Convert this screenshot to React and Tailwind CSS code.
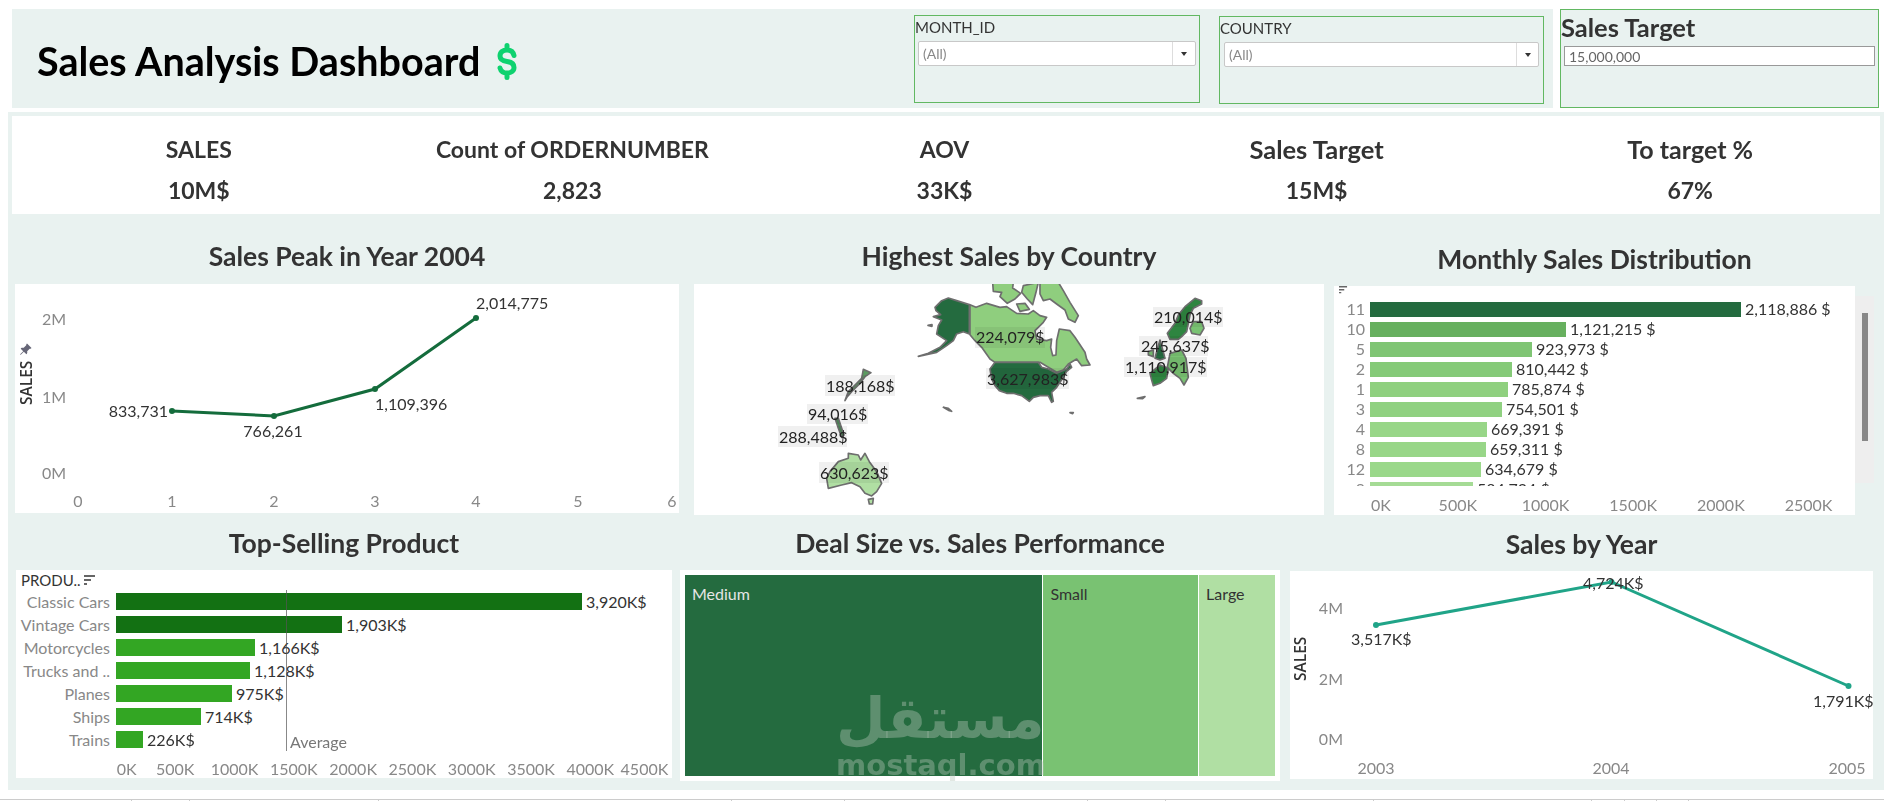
import { BsPinAngleFill } from "react-icons/bs";

const months = [
  { m: "11", v: "2,118,886 $", w: 371, c: "#246b3f" },
  { m: "10", v: "1,121,215 $", w: 196, c: "#67b05f" },
  { m: "5", v: "923,973 $", w: 162, c: "#7fc574" },
  { m: "2", v: "810,442 $", w: 142, c: "#85ca78" },
  { m: "1", v: "785,874 $", w: 138, c: "#8fd07f" },
  { m: "3", v: "754,501 $", w: 132, c: "#90d181" },
  { m: "4", v: "669,391 $", w: 117, c: "#98d688" },
  { m: "8", v: "659,311 $", w: 116, c: "#98d688" },
  { m: "12", v: "634,679 $", w: 111, c: "#9ad88a" },
  { m: "9", v: "584,724 $", w: 103, c: "#a5db95" },
];

const products = [
  { n: "Classic Cars", v: "3,920K$", w: 466, c: "#137113" },
  { n: "Vintage Cars", v: "1,903K$", w: 226, c: "#137113" },
  { n: "Motorcycles", v: "1,166K$", w: 139, c: "#33a623" },
  { n: "Trucks and ..", v: "1,128K$", w: 134, c: "#33a623" },
  { n: "Planes", v: "975K$", w: 116, c: "#33a623" },
  { n: "Ships", v: "714K$", w: 85, c: "#33a623" },
  { n: "Trains", v: "226K$", w: 27, c: "#33a623" },
];

const kpis = [
  { k: "SALES", v: "10M$", c: "text-[23px]", p: "" },
  { k: "Count of ORDERNUMBER", v: "2,823", c: "text-[23px]", p: "" },
  { k: "AOV", v: "33K$", c: "text-[23px]", p: "pr-[3px]" },
  { k: "Sales Target", v: "15M$", c: "text-[25.5px]", p: "pr-[6px]" },
  { k: "To target %", v: "67%", c: "text-[25px]", p: "pr-[6px]" },
];

const mapLabels = [
  { t: "224,079$", x: 976, y: 337, bx: 975, bw: 70, by: 327, bh: 21 },
  { t: "3,627,983$", x: 987, y: 379, bx: 986, bw: 83, by: 368, bh: 21 },
  { t: "210,014$", x: 1154, y: 317, bx: 1153, bw: 70, by: 307, bh: 20 },
  { t: "245,637$", x: 1141, y: 346, bx: 1139, bw: 69, by: 336, bh: 20 },
  { t: "1,110,917$", x: 1125, y: 367, bx: 1124, bw: 83, by: 357, bh: 20 },
  { t: "188,168$", x: 826, y: 386, bx: 825, bw: 70, by: 375, bh: 21 },
  { t: "94,016$", x: 808, y: 414, bx: 807, bw: 61, by: 404, bh: 20 },
  { t: "288,488$", x: 779, y: 437, bx: 778, bw: 69, by: 426, bh: 21 },
  { t: "630,623$", x: 820, y: 473, bx: 819, bw: 70, by: 462, bh: 21 },
];

const ticks = [132, 58, 189, 353, 113, 243, 78, 208, 218, 33, 32, 32];

function Title({ children, className }) {
  return (
    <div className={"flex items-center justify-center text-[26.5px] font-bold text-[#333] " + className}>
      {children}
    </div>
  );
}

function Filter({ label, className, selectClass, dividerClass }) {
  return (
    <div className={"border border-[#62b862] " + className}>
      <div className="h-[25px] text-[15px] leading-[23px] text-[#333]">{label}</div>
      <div className={"flex h-[25px] items-center justify-between rounded-[2px] border border-[#c8c8c8] bg-white text-[14px] text-[#888] " + selectClass}>
        <span className="pl-1">(All)</span>
        <span className={"flex h-full items-center justify-center border-l border-[#ddd] " + dividerClass}>
          <span className="h-0 w-0 border-x-[3px] border-t-[4px] border-x-transparent border-t-[#333]" />
        </span>
      </div>
    </div>
  );
}

function SortIcon({ className }) {
  return (
    <svg width="11" height="10" viewBox="0 0 11 10" className={className}>
      <rect x="0" y="0" width="11" height="2" fill="#666" />
      <rect x="0" y="4" width="7" height="2" fill="#666" />
      <rect x="0" y="8" width="3" height="2" fill="#666" />
    </svg>
  );
}

function PeakChart() {
  const ax = "fill-[#888] text-[16px]";
  const lb = "fill-[#333] text-[16px]";
  return (
    <svg width="664" height="229" className="block">
      <polyline points="157,127 259,132 360,105 461,34" fill="none" stroke="#146c3c" strokeWidth="3" />
      {[[157, 127], [259, 132], [360, 105], [461, 34]].map(([x, y]) => (
        <circle key={x} cx={x} cy={y} r="3" fill="#146c3c" />
      ))}
      <text x="461" y="25" className={lb}>2,014,775</text>
      <text x="153" y="133" textAnchor="end" className={lb}>833,731</text>
      <text x="258" y="153" textAnchor="middle" className={lb}>766,261</text>
      <text x="360" y="126" className={lb}>1,109,396</text>
      <text x="27" y="41" className={ax}>2M</text>
      <text x="27" y="119" className={ax}>1M</text>
      <text x="27" y="195" className={ax}>0M</text>
      {["0", "1", "2", "3", "4", "5", "6"].map((t, i) => (
        <text key={t} x={[63, 157, 259, 360, 461, 563, 657][i]} y="223" textAnchor="middle" className={ax}>{t}</text>
      ))}
      <text transform="translate(17 121) rotate(-90)" className="fill-[#333] text-[15.5px] font-semibold font-['Open_Sans',sans-serif]">SALES</text>
    </svg>
  );
}

function YearChart() {
  const ax = "fill-[#888] text-[16px]";
  const lb = "fill-[#333] text-[16px]";
  return (
    <svg width="583" height="208" className="block">
      <polyline points="86,54 321.5,11 558.5,115" fill="none" stroke="#20a488" strokeWidth="3" />
      {[[86, 54], [321.5, 11], [558.5, 115]].map(([x, y]) => (
        <circle key={x} cx={x} cy={y} r="3" fill="#20a488" />
      ))}
      <text x="61" y="74" className={lb}>3,517K$</text>
      <text x="293" y="18" className={lb}>4,724K$</text>
      <text x="523" y="136" className={lb}>1,791K$</text>
      <text x="53" y="43" textAnchor="end" className={ax}>4M</text>
      <text x="53" y="114" textAnchor="end" className={ax}>2M</text>
      <text x="53" y="174" textAnchor="end" className={ax}>0M</text>
      <text x="86" y="203" textAnchor="middle" className={ax}>2003</text>
      <text x="321" y="203" textAnchor="middle" className={ax}>2004</text>
      <text x="557" y="203" textAnchor="middle" className={ax}>2005</text>
      <text transform="translate(16 110) rotate(-90)" className="fill-[#333] text-[15.5px] font-semibold font-['Open_Sans',sans-serif]">SALES</text>
    </svg>
  );
}

function MapChart() {
  const s = { stroke: "#6e6e6e", strokeWidth: 5, strokeLinejoin: "round" };
  const light = "#8fce7e";
  const dark = "#246b3f";
  return (
    <svg width="630" height="231" className="block">
      {/* north america */}
      <g transform="translate(206 0) scale(0.3333)">
        <polygon {...s} fill={dark} points="105,70 125,50 145,42 170,50 208,62 208,150 190,143 170,150 160,170 140,185 110,205 55,217 85,208 120,190 140,170 125,160 110,150 115,125 125,108 100,98 122,92 108,80" />
        <polygon {...s} fill={light} points="210,62 228,70 260,58 300,70 320,68 350,88 385,90 400,80 420,95 440,100 430,115 405,140 410,165 440,170 455,165 452,190 458,215 468,213 470,170 478,135 510,140 525,160 555,205 560,225 570,243 545,245 530,225 505,240 490,258 470,265 445,250 420,235 285,235 270,225 245,190 225,170 210,152" />
        <polygon {...s} fill={light} points="278,-5 340,-5 338,12 362,28 345,45 322,58 300,38 305,25 280,22" />
        <polygon {...s} fill={light} points="370,5 415,-5 408,25 398,62 382,45 365,25" />
        <polygon {...s} fill={light} points="420,-5 475,-5 490,20 510,55 535,95 525,115 505,105 495,78 470,60 450,45 430,50 420,30" />
        <polygon {...s} fill={light} points="350,60 375,58 388,76 360,82" />
        <polygon {...s} fill={dark} points="285,235 415,235 425,250 445,255 470,268 500,255 510,240 515,250 500,262 490,280 480,295 470,310 455,325 460,352 455,355 445,335 420,335 400,340 388,352 365,335 340,328 320,328 298,320 285,305 275,285 270,255" />
        <polygon {...s} fill="#6e6e6e" points="130,370 145,373 155,382 148,380" />
        <polygon {...s} fill="#6e6e6e" points="510,386 520,386 518,389" />
        <polygon {...s} fill="#6e6e6e" points="84,124 96,122 96,127" />
      </g>
      {/* europe */}
      <g transform="translate(416 6) scale(0.3333)">
        <polygon {...s} fill="#2e8540" points="255,25 275,32 275,42 250,55 240,75 235,100 230,125 215,140 205,148 180,148 172,130 195,100 205,75 225,50" />
        <polygon {...s} fill="#79c272" points="250,95 275,95 282,115 270,135 245,130 240,115" />
        <polygon {...s} fill="#79c272" points="115,185 130,180 130,200 115,195" />
        <polygon {...s} fill={dark} points="140,185 150,150 165,205 150,210 135,205" />
        <polygon {...s} fill="#79c272" points="180,190 215,180 228,205 235,262 222,285 210,265 190,250 172,232" />
        <polygon {...s} fill="#2e8540" points="120,250 150,225 175,235 170,265 150,280 130,287 125,270" />
        <polygon {...s} fill="#6e6e6e" points="82,325 105,320 98,326" />
      </g>
      {/* asia and australia */}
      <g transform="translate(76 76) scale(0.3333)">
        <polygon {...s} fill="#5a9a60" points="280,28 303,38 285,50 270,70 245,95 232,110 225,122 235,95 255,75 275,55" />
        <polygon {...s} fill="#4d8a58" points="195,175 205,175 222,225 215,232 205,205" />
        <polygon {...s} fill="#b0dfa3" points="175,385 170,355 180,335 205,305 235,295 235,280 265,285 272,300 285,280 298,305 320,335 335,370 320,395 305,408 285,400 270,380 245,368 215,375" />
        <polygon {...s} fill="#b0dfa3" points="295,418 310,415 308,432 298,432" />
      </g>
      {mapLabels.map((l) => (
        <g key={l.t}>
          <rect x={l.bx - 694} y={l.by - 284} width={l.bw} height={l.bh} fill="#f0f0f0" className="mix-blend-multiply" />
          <text x={l.x - 694} y={l.y - 284 + 6} className="fill-[#222] text-[16px]">{l.t}</text>
        </g>
      ))}
    </svg>
  );
}

export default function App() {
  return (
    <div className="h-[801px] w-[1884px] overflow-hidden bg-white font-['Lato',sans-serif]">
      {/* top bar */}
      <div className="flex h-[112px] pl-[12px] pt-[9px]">
        <div className="flex h-[99px] w-[1541px] bg-[#e9f2f0]">
          <div className="flex w-[902px] items-center pl-[25px] pt-[5px]">
            <h1 className="text-[39.5px] font-bold text-black">Sales Analysis Dashboard</h1>
            <svg width="20" height="37" viewBox="0 0 20 37" fill="none" stroke="#0ed26f" strokeWidth="5" strokeLinecap="round" className="ml-[17px]">
              <path d="M17 12.5C16 8 13 7 10 7C6 7 3 9 3 13C3 17 6 18 10 18.5C14 19 17 20.5 17 24.5C17 28 14 30 10 30C7 30 4 29 3 25M10 2.5V7M10 30V34.5" />
            </svg>
          </div>
          <Filter label="MONTH_ID" className="mt-[6px] h-[88px] w-[286px]" selectClass="mx-[3px]" dividerClass="w-[23px]" />
          <Filter label="COUNTRY" className="ml-[19px] mt-[7px] h-[88px] w-[325px]" selectClass="mx-[4px]" dividerClass="w-[22px]" />
        </div>
        <div className="ml-[7px] h-[99px] w-[319px] border border-[#62b862] bg-[#e9f2f0]">
          <div className="h-[36px] text-[25.5px] font-bold leading-[34px] text-[#333]">Sales Target</div>
          <div className="mx-[3px] flex h-[20px] items-center border border-[#999] bg-white pl-1 text-[14px] text-[#666]">15,000,000</div>
        </div>
      </div>

      {/* main panel */}
      <div className="ml-[8px] h-[678px] bg-[#e9f2f0] pt-[4px]">
        <div className="ml-[4px] grid h-[98px] w-[1868px] grid-cols-5 bg-white text-center font-bold text-[#333]">
          {kpis.map((i) => (
            <div key={i.k} className={"flex flex-col items-center pt-[19px] " + i.p}>
              <div className={"h-[41px] leading-[28px] " + i.c}>{i.k}</div>
              <div className="text-[23px] leading-[28px]">{i.v}</div>
            </div>
          ))}
        </div>

        {/* first chart row */}
        <div className="flex h-[301px]">
          <div className="ml-[7px] w-[664px]">
            <Title className="mt-[16px] h-[54px]">Sales Peak in Year 2004</Title>
            <div className="relative h-[229px] bg-white">
              <PeakChart />
              <BsPinAngleFill className="absolute left-[4px] top-[59px] h-[13px] w-[13px] text-[#667]" />
            </div>
          </div>
          <div className="ml-[15px] w-[630px]">
            <Title className="mt-[16px] h-[54px]">Highest Sales by Country</Title>
            <div className="h-[231px] bg-white">
              <MapChart />
            </div>
          </div>
          <div className="ml-[10px] w-[521px]">
            <Title className="mt-[18px] h-[54px] pt-[2px]">Monthly Sales Distribution</Title>
            <div className="h-[229px] bg-white">
              <SortIcon className="ml-[5px] block origin-top-left scale-75" />
              <div className="mt-[3px] h-[187px] overflow-hidden">
                {months.map((r) => (
                  <div key={r.m} className="flex h-[20px] items-center">
                    <span className="w-[31px] text-right text-[16px] text-[#888]">{r.m}</span>
                    <span className="ml-[5px] h-[15px]" style={{ width: r.w, backgroundColor: r.c }} />
                    <span className="ml-[4px] text-[16px] text-[#333]">{r.v}</span>
                  </div>
                ))}
              </div>
              <div className="mt-[7px] flex text-[16px] text-[#888]">
                <span className="w-[80px] pl-[14px] text-center">0K</span>
                {["500K", "1000K", "1500K", "2000K", "2500K"].map((t) => (
                  <span key={t} className="w-[87.7px] text-center">{t}</span>
                ))}
              </div>
            </div>
          </div>
          <div className="mt-[82px] h-[187px] w-[19px] bg-[#eee] pl-[7px] pt-[17px]">
            <div className="h-[128px] w-[6px] bg-[#888]" />
          </div>
        </div>

        {/* second chart row */}
        <div className="flex">
          <div className="ml-[8px] w-[656px]">
            <Title className="h-[55px] pt-[2px]">Top-Selling Product</Title>
            <div className="relative h-[208px] bg-white">
              <div className="flex h-[20px] items-center pl-[5px] text-[15px] text-[#333]">
                PRODU..
                <SortIcon className="ml-[3px]" />
              </div>
              {products.map((p) => (
                <div key={p.n} className="flex h-[23px] items-center">
                  <span className="w-[94px] truncate text-right text-[16px] text-[#888]">{p.n}</span>
                  <span className="ml-[6px] h-[17px]" style={{ width: p.w, backgroundColor: p.c }} />
                  <span className="ml-[4px] text-[16px] text-[#333]">{p.v}</span>
                </div>
              ))}
              <div className="absolute bottom-[27px] left-[270px] top-[20px] w-[1px] bg-[#555]/70" />
              <span className="absolute left-[274px] top-[160px] text-[16px] text-[#777]">Average</span>
              <div className="mt-[6px] flex text-[16px] text-[#888]">
                <span className="w-[129.6px] pr-[9px] text-right">0K</span>
                {["500K", "1000K", "1500K", "2000K", "2500K", "3000K", "3500K", "4000K"].map((t) => (
                  <span key={t} className="w-[59.3px] text-center">{t}</span>
                ))}
                <span className="w-[49px] text-center">4500K</span>
              </div>
            </div>
          </div>
          <div className="ml-[8px] w-[600px]">
            <Title className="h-[55px] pt-[2px]">Deal Size vs. Sales Performance</Title>
            <div className="relative h-[211px] bg-white p-[5px]">
              <div className="flex h-[201px] text-[16px]">
                <div className="w-[358px] bg-[#246b3f] pl-[7px] pt-[7px] text-[#e6e6e6]">Medium</div>
                <div className="ml-[1px] w-[155px] bg-[#79c272] pl-[7px] pt-[7px] text-[#333]">Small</div>
                <div className="ml-[1px] w-[76px] bg-[#b0dfa3] pl-[7px] pt-[7px] text-[#333]">Large</div>
              </div>
              <div className="absolute left-[156px] top-[116px] w-[208px] text-center font-['DejaVu_Sans',sans-serif] font-bold text-[#b7c5b9]/40">
                <div className="text-[57px] leading-[64px]">مستقل</div>
                <div className="text-[29px] leading-[30px]">mostaql.com</div>
              </div>
            </div>
          </div>
          <div className="ml-[10px] w-[583px]">
            <Title className="h-[56px] pt-[4px]">Sales by Year</Title>
            <div className="h-[208px] bg-white">
              <YearChart />
            </div>
          </div>
        </div>
      </div>

      {/* bottom edge */}
      <div className="mt-[9px] h-[1px] bg-[#ccc]" />
      <div className="flex h-[1px]">
        {ticks.map((w, i) => (
          <span key={i} className="border-r border-[#ccc]" style={{ width: w }} />
        ))}
      </div>
    </div>
  );
}
